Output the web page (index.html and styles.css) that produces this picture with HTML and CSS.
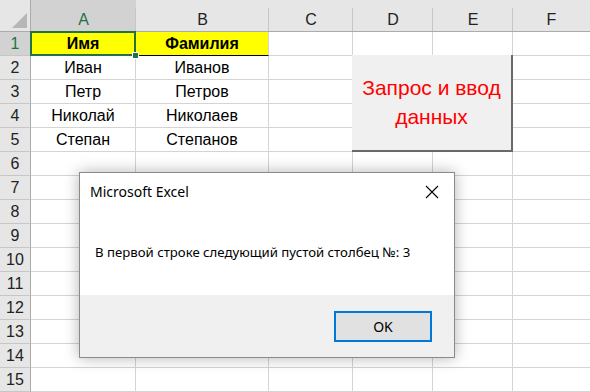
FILE: index.html
```html
<!DOCTYPE html>
<html lang="ru">
<head>
    <meta charset="UTF-8">
    <title>Excel</title>
    <link rel="stylesheet" href="styles.css">
</head>
<body>
    <div class="sheet">
        <div class="corner"><span class="tri"></span></div>
        <div class="col-head active">A</div>
        <div class="col-head">B</div>
        <div class="col-head">C</div>
        <div class="col-head">D</div>
        <div class="col-head">E</div>
        <div class="col-head last">F</div>

        <div class="row-head active">1</div>
        <div class="cell title selected">Имя<span class="handle"></span></div>
        <div class="cell title underline">Фамилия</div>
        <div class="cell"></div><div class="cell"></div><div class="cell"></div><div class="cell last"></div>

        <div class="row-head">2</div>
        <div class="cell">Иван</div><div class="cell">Иванов</div>
        <div class="cell"></div><div class="cell"></div><div class="cell"></div><div class="cell last"></div>

        <div class="row-head">3</div>
        <div class="cell">Петр</div><div class="cell">Петров</div>
        <div class="cell"></div><div class="cell"></div><div class="cell"></div><div class="cell last"></div>

        <div class="row-head">4</div>
        <div class="cell">Николай</div><div class="cell">Николаев</div>
        <div class="cell"></div><div class="cell"></div><div class="cell"></div><div class="cell last"></div>

        <div class="row-head">5</div>
        <div class="cell">Степан</div><div class="cell">Степанов</div>
        <div class="cell"></div><div class="cell"></div><div class="cell"></div><div class="cell last"></div>
    </div>

    <button class="macro-btn">Запрос и ввод<br>данных</button>

    <div class="dialog">
        <div class="dialog-top">
            <div class="dialog-title">
                <span>Microsoft Excel</span>
                <svg class="close" width="14" height="14" viewBox="0 0 14 14">
                    <path d="M1 1 L13 13 M13 1 L1 13" stroke="#000" stroke-width="1.1" fill="none"/>
                </svg>
            </div>
            <div class="dialog-text">В первой строке следующий пустой столбец №: 3</div>
        </div>
        <div class="dialog-foot">
            <button class="ok-btn">OK</button>
        </div>
    </div>

    <script>
        // rows 6..15 are empty, build them here
        let sheet = document.querySelector(".sheet");
        for (let r = 6; r <= 15; r++) {
            let head = document.createElement("div");
            head.className = "row-head";
            head.textContent = r;
            sheet.appendChild(head);
            for (let c = 0; c < 6; c++) {
                let cell = document.createElement("div");
                cell.className = c == 5 ? "cell last" : "cell";
                sheet.appendChild(cell);
            }
        }
    </script>
</body>
</html>
```

FILE: styles.css
```css
body {
    margin: 0;
    width: 590px;
    height: 392px;
    overflow: hidden;
    position: relative;
    background-color: #ffffff;
    font-family: 'Liberation Sans', Arial, sans-serif;
}

.sheet {
    display: grid;
    grid-template-columns: 31px 105px 133px 84px 80px 80px 1fr;
    grid-template-rows: 32px repeat(15, 24px);
    font-size: 16px;
    color: #000;
}

.corner, .col-head {
    background-color: #e6e6e6;
    border-bottom: 1px solid #ababab;
    box-sizing: border-box;
}

.corner {
    position: relative;
    border-right: 1px solid #ababab;
}

.tri {
    position: absolute;
    right: 3px;
    bottom: 3px;
    width: 0;
    height: 0;
    border-left: 15px solid transparent;
    border-bottom: 15px solid #b6b6b6;
}

.col-head {
    display: flex;
    align-items: center;
    justify-content: center;
    padding-top: 8px;
    color: #222;
    position: relative;
}

.col-head::after {
    content: "";
    position: absolute;
    right: 0;
    top: 8px;
    bottom: 0;
    width: 1px;
    background-color: #c6c6c6;
}

.col-head.last::after {
    display: none;
}

.col-head.active {
    background-color: #d2d2d2;
    color: #217346;
}

.row-head {
    background-color: #e6e6e6;
    border-right: 1px solid #ababab;
    border-bottom: 1px solid #c6c6c6;
    box-sizing: border-box;
    display: flex;
    align-items: center;
    justify-content: center;
    color: #222;
}

.row-head.active {
    background-color: #d2d2d2;
    color: #217346;
}

.cell {
    border-right: 1px solid #d4d4d4;
    border-bottom: 1px solid #d4d4d4;
    box-sizing: border-box;
    display: flex;
    align-items: center;
    justify-content: center;
    position: relative;
}

.cell.last {
    border-right: none;
}

.cell.title {
    background-color: #ffff00;
    font-weight: bold;
}

.cell.underline {
    border-bottom: 1px solid #000;
}

.cell.selected::after {
    content: "";
    position: absolute;
    left: -1px;
    top: -1px;
    right: -1px;
    bottom: -1px;
    border: 2px solid #217346;
}

.handle {
    position: absolute;
    right: -4px;
    bottom: -4px;
    width: 5px;
    height: 5px;
    background-color: #217346;
    border: 1px solid #fff;
    z-index: 2;
}

.macro-btn {
    position: absolute;
    left: 352px;
    top: 55px;
    width: 161px;
    height: 97px;
    box-sizing: border-box;
    margin: 0;
    padding: 0 0 2px 0;
    background-color: #f0f0f0;
    border: none;
    border-right: 2px solid #696969;
    border-bottom: 2px solid #696969;
    color: #ff0000;
    font-family: 'Liberation Sans', Arial, sans-serif;
    font-size: 21px;
    line-height: 29px;
}

.dialog {
    position: absolute;
    left: 79px;
    top: 172px;
    width: 376px;
    height: 186px;
    box-sizing: border-box;
    border: 1px solid #8a8a8a;
    background-color: #ffffff;
    box-shadow: 0 0 14px rgba(0, 0, 0, 0.3);
    display: flex;
    flex-direction: column;
    font-family: 'Noto Sans', 'Open Sans', sans-serif;
    color: #000;
}

.dialog-top {
    height: 122px;
}

.dialog-title {
    display: flex;
    justify-content: space-between;
    align-items: center;
    padding: 9px 15px 0 10px;
    font-size: 14px;
}

.close {
    margin-top: 1px;
}

.dialog-text {
    padding: 42px 0 0 15px;
    font-size: 13.2px;
}

.dialog-foot {
    flex: 1;
    background-color: #f0f0f0;
    display: flex;
    justify-content: flex-end;
    align-items: flex-start;
    padding: 16px 22px 0 0;
}

.ok-btn {
    width: 98px;
    height: 31px;
    margin: 0;
    box-sizing: border-box;
    border: 2px solid #0078d7;
    background-color: #e1e1e1;
    font-family: 'Noto Sans', 'Open Sans', sans-serif;
    font-size: 14px;
    color: #000;
}
```
